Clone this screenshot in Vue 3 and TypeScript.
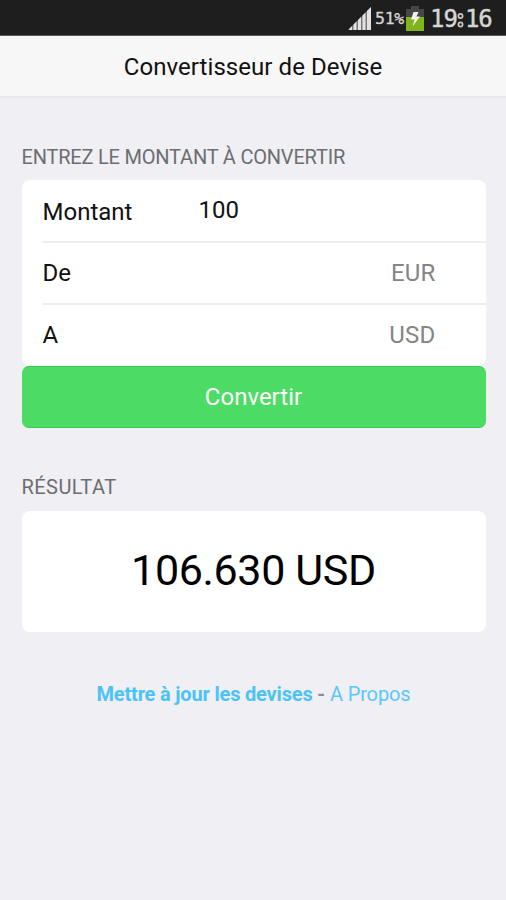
<script setup lang="ts">
import { ref } from 'vue'

const amount = ref('100')
const currencies = [
  { label: 'De', code: 'EUR' },
  { label: 'A', code: 'USD' },
]
const result = ref('106.630 USD')
</script>

<template>
  <div class="screen">
    <div class="status">
      <svg class="signal" width="23" height="23" viewBox="0 0 23 23">
        <path d="M0 23 23 0V23Z" fill="#777" />
        <path d="M1 23v-1l3-3v4zM5.500 23v-5.500l3-3v8.500zM10 23V13l3-3v13zM14.500 23V8.500l3-3v17.500zM19 23V4L23 0v23z" fill="#e2e2e2" />
      </svg>
      <span class="percent">51%</span>
      <svg class="battery" width="18" height="25" viewBox="0 0 18 25">
        <path d="M5 0h8v3h5v8H0V3h5z" fill="#464646" />
        <path d="M0 11h18v14H0z" fill="#7fb51b" />
        <path d="M7.500 6h5L10.500 10.500H14L6.500 20.500l2-7H5z" fill="#f0f2ec" />
      </svg>
      <span class="clock">19<svg class="colon" width="8" height="19" viewBox="0 0 8 19"><g fill="none" stroke="#c8c8c8" stroke-width="1.700"><circle cx="3.500" cy="6" r="2.100" /><circle cx="3.500" cy="14.500" r="2.100" /></g></svg>16</span>
    </div>

    <header class="bar"><h1>Convertisseur de Devise</h1></header>

    <main>
      <h2 class="t-enter">ENTREZ LE MONTANT À CONVERTIR</h2>
      <div class="card form">
        <label class="row">
          <span class="name montant">Montant</span>
          <input v-model="amount" class="amount" type="text" inputmode="decimal" />
        </label>
        <div v-for="c in currencies" :key="c.label" class="row">
          <span class="name">{{ c.label }}</span>
          <span class="code">{{ c.code }}</span>
        </div>
      </div>
      <button class="convert" type="button"><span>Convertir</span></button>

      <h2 class="t-result">RÉSULTAT</h2>
      <div class="card result"><span>{{ result }}</span></div>

      <p class="links">
        <a class="update">Mettre à jour les devises</a><b class="dash"> - </b><a class="about">A Propos</a>
      </p>
    </main>
  </div>
</template>

<style>
body {
  margin: 0;
  background: #efeff4;
}
</style>

<style scoped>
.screen {
  width: 506px;
  height: 900px;
  overflow: hidden;
  background: #efeff4;
  font-family: Roboto, sans-serif;
  color: #111;
}
.status {
  box-sizing: border-box;
  height: 36px;
  padding: 0 14px 0 0;
  display: flex;
  justify-content: flex-end;
  align-items: flex-start;
  background: #1e1e1e;
  color: #d6d6d6;
  border-bottom: 1px solid #5a5a5a;
}
.signal {
  margin: 7px 4px 0 0;
}
.percent {
  width: 31px;
  font: 16.500px/20px "DejaVu Sans Mono", monospace;
  letter-spacing: -0.3px;
  margin-top: 9px;
  -webkit-text-stroke: 0.3px #d6d6d6;
}
.battery {
  margin-top: 6px;
}
.clock {
  display: flex;
  align-items: center;
  width: 62px;
  margin: 5px 0 0 6px;
  font: 24px/28px "DejaVu Sans Mono", monospace;
  letter-spacing: -1px;
  -webkit-text-stroke: 0.4px #d6d6d6;
}
.colon {
  flex: none;
}
.bar {
  box-sizing: border-box;
  height: 62px;
  background: #f7f7f7;
  border-bottom: 2px solid #e8e8ec;
  text-align: center;
}
h1 {
  margin: 0;
  font-size: 24px;
  font-weight: 400;
  line-height: 62px;
  letter-spacing: 0.06px;
}
main {
  padding: 0 20.500px 0 21.500px;
}
h2 {
  margin: 0;
  font-size: 20px;
  line-height: 24px;
  font-weight: 400;
  color: #6d6d72;
}
.t-enter {
  padding: 47px 0 11px;
  letter-spacing: -0.2px;
}
.card {
  background: #fff;
  border-radius: 8px;
}
.form {
  height: 186px;
}
.row {
  box-sizing: border-box;
  height: 62px;
  margin-left: 21px;
  padding-right: 50px;
  display: flex;
  align-items: center;
  font-size: 24px;
  line-height: 28px;
}
.row:first-child {
  height: 61px;
  padding-top: 2px;
}
.row + .row {
  border-top: 2px solid #ededf0;
}
.name {
  flex: none;
}
.montant {
  width: 156px;
}
.amount {
  min-width: 0;
  width: 180px;
  padding: 0;
  margin-bottom: 3px;
  border: 0;
  outline: 0;
  background: none;
  font: inherit;
  letter-spacing: inherit;
  color: inherit;
}
.code {
  margin-left: auto;
  color: #858585;
  letter-spacing: 0.2px;
}
.convert {
  display: block;
  box-sizing: border-box;
  width: 100%;
  height: 62px;
  padding: 0;
  border: 1px solid #35cf57;
  border-left-color: #4cdb64;
  border-right-color: #4cdb64;
  border-radius: 7px;
  background: #4cdb64;
  color: #fff;
  font: 24px/28px Roboto, sans-serif;
}
.t-result {
  padding: 47px 0 12px;
  letter-spacing: 0.45px;
}
.result {
  height: 120.500px;
  font-size: 43px;
  line-height: 119px;
  letter-spacing: -0.35px;
  text-align: center;
  color: #000;
}
.links {
  margin: 50.500px 0 0;
  font-size: 20px;
  line-height: 24px;
  letter-spacing: -0.13px;
  text-align: center;
  white-space: pre-wrap;
  color: #8e8e93;
}
.update {
  font-weight: 700;
  letter-spacing: -0.18px;
  color: #4cc3f7;
}
.about {
  color: #5ac8fa;
}
</style>
